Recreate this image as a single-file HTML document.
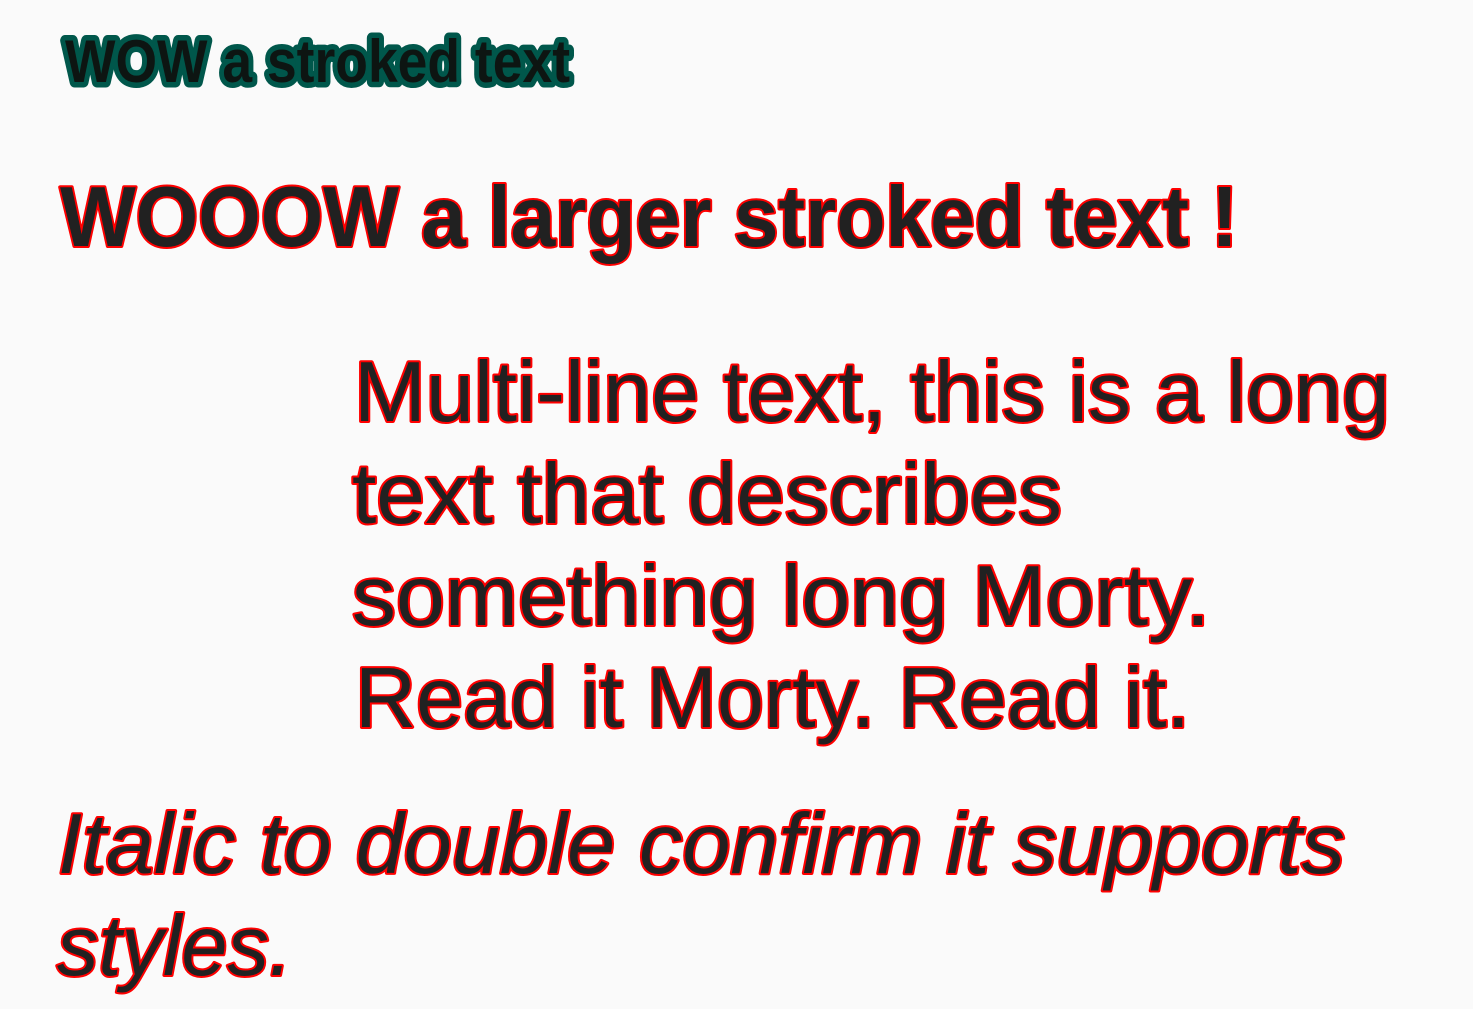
<!DOCTYPE html>
<html><head><meta charset="utf-8"><style>
html,body{margin:0;padding:0;background:#fafafa;width:1473px;height:1009px;overflow:hidden}
svg{display:block}
text{font-family:"Liberation Sans",sans-serif;paint-order:stroke fill;stroke-linejoin:round}
.g{fill:#0d1512;stroke:#00574b;stroke-width:11;font-weight:bold;font-size:60px}
.r{fill:#212121;stroke:#ff0000;stroke-width:4;font-size:85px}
.b{font-weight:bold}
.i{font-style:italic}
</style></head><body>
<svg width="1473" height="1009" viewBox="0 0 1473 1009">
<text class="g" x="65" y="82" textLength="505" lengthAdjust="spacingAndGlyphs">WOW a stroked text</text>
<text class="r b" x="60" y="246" textLength="1178" lengthAdjust="spacingAndGlyphs">WOOOW a larger stroked text !</text>
<text class="r" x="354" y="421" textLength="1036" lengthAdjust="spacingAndGlyphs">Multi-line text, this is a long</text>
<text class="r" x="352" y="523" textLength="710" lengthAdjust="spacingAndGlyphs">text that describes</text>
<text class="r" x="352" y="625" textLength="858" lengthAdjust="spacingAndGlyphs">something long Morty.</text>
<text class="r" x="355" y="727" textLength="835" lengthAdjust="spacingAndGlyphs">Read it Morty. Read it.</text>
<text class="r i" x="58" y="873" textLength="1287" lengthAdjust="spacingAndGlyphs">Italic to double confirm it supports</text>
<text class="r i" x="57" y="975" textLength="235" lengthAdjust="spacingAndGlyphs">styles.</text>
</svg>
</body></html>
